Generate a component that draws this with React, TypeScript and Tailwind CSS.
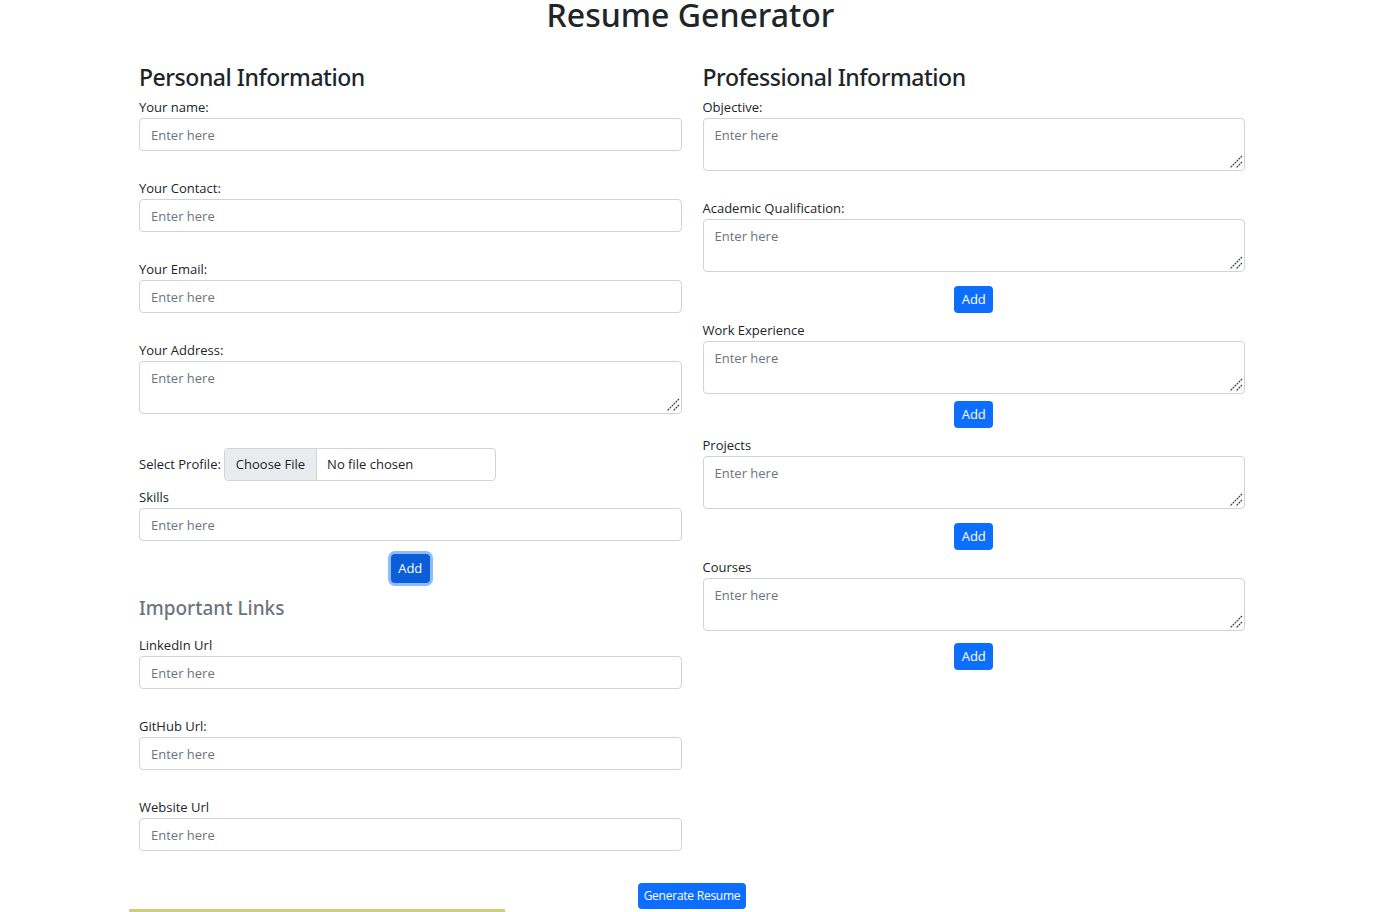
import React from 'react';

const inputCls =
  'block w-full h-[33px] rounded-[4px] border border-[#ced4da] bg-white px-[11px] text-[13px] text-[#212529] placeholder:text-[#6c757d] outline-none';
const areaCls =
  'block w-full h-[53px] rounded-[4px] border border-[#ced4da] bg-white px-[11px] py-[6px] leading-[21px] text-[13px] text-[#212529] placeholder:text-[#6c757d] outline-none resize-none';

function Label({ children }: { children: React.ReactNode }) {
  return <label className="block text-[13px] leading-[21px] text-[#212529]">{children}</label>;
}

// windows-style resize grip drawn over the textarea corner
function Grip() {
  return (
    <svg className="pointer-events-none absolute right-[2px] bottom-[2px]" width="14" height="14" viewBox="0 0 14 14">
      <path d="M13 1 L1 13" stroke="#3c3c3c" strokeWidth="1.2" strokeDasharray="2 0.8" />
      <path d="M13 7 L7 13" stroke="#3c3c3c" strokeWidth="1.2" strokeDasharray="2 0.8" />
    </svg>
  );
}

function Field({ label, area, className = '' }: { label: string; area?: boolean; className?: string }) {
  return (
    <div className={className}>
      <Label>{label}</Label>
      {area ? (
        <div className="relative">
          <textarea className={areaCls} placeholder="Enter here" />
          <Grip />
        </div>
      ) : (
        <input className={inputCls} placeholder="Enter here" />
      )}
    </div>
  );
}

function AddButton({ className = '' }: { className?: string }) {
  return (
    <div className={`flex justify-center ${className}`}>
      <button className="h-[27px] w-[39px] rounded-[4px] bg-[#0d6efd] text-[13px] text-white">Add</button>
    </div>
  );
}

export default function App() {
  return (
    <div className="min-h-screen bg-white font-['Open_Sans',sans-serif] text-[#212529]">
      <h1 className="-mt-[4px] text-center font-['Noto_Sans',sans-serif] text-[32px] leading-[38px] font-medium">
        Resume Generator
      </h1>

      <div className="ml-[139px] w-[1106px]">
        <div className="mt-[29px] grid grid-cols-2 gap-x-[21px]">
          {/* Personal */}
          <div>
            <h4 className="mb-[5px] font-['Noto_Sans',sans-serif] text-[23px] leading-[29px] font-medium tracking-[-0.02em]">
              Personal Information
            </h4>
            <Field label="Your name:" className="mb-[27px]" />
            <Field label="Your Contact:" className="mb-[27px]" />
            <Field label="Your Email:" className="mb-[27px]" />
            <Field label="Your Address:" area />

            <div className="mt-[34px] flex h-[33px] items-center">
              <span className="mr-[3px] text-[13px]">Select Profile:</span>
              <input
                type="file"
                className="h-[33px] w-[272px] overflow-hidden rounded-[4px] border border-[#ced4da] text-[13px] leading-[31px] text-[#212529] file:mr-[10px] file:h-[31px] file:border-0 file:border-r file:border-solid file:border-[#ced4da] file:bg-[#e9ecef] file:px-[11px] file:text-[13px] file:text-[#212529]"
              />
            </div>

            <Field label="Skills" className="mt-[6px]" />
            <div className="mt-[13px] flex justify-center">
              <button className="h-[29px] w-[39px] rounded-[4px] bg-[#0b5ed7] text-[13px] text-white ring-[3px] ring-[#8fbbfd]">
                Add
              </button>
            </div>

            <h5 className="mt-[13px] mb-[15px] font-['Noto_Sans',sans-serif] text-[19px] leading-[24px] font-medium text-[#6c757d]">
              Important Links
            </h5>
            <Field label="LinkedIn Url" className="mb-[27px]" />
            <Field label="GitHub Url:" className="mb-[27px]" />
            <Field label="Website Url" />
          </div>

          {/* Professional */}
          <div>
            <h4 className="mb-[5px] font-['Noto_Sans',sans-serif] text-[23px] leading-[29px] font-medium tracking-[-0.02em]">
              Professional Information
            </h4>
            <Field label="Objective:" area className="mb-[27px]" />
            <Field label="Academic Qualification:" area />
            <AddButton className="mt-[14px]" />
            <Field label="Work Experience" area className="mt-[7px]" />
            <AddButton className="mt-[7px]" />
            <Field label="Projects" area className="mt-[7px]" />
            <AddButton className="mt-[14px]" />
            <Field label="Courses" area className="mt-[7px]" />
            <AddButton className="mt-[12px]" />
          </div>
        </div>

        <div className="mt-[32px] flex justify-center">
          <button className="h-[26px] w-[108px] whitespace-nowrap rounded-[4px] bg-[#0d6efd] text-[12px] tracking-[-0.02em] text-white">
            Generate Resume
          </button>
        </div>
      </div>

      <div className="ml-[129px] h-[3px] w-[376px] bg-[#cfce7c]" />
    </div>
  );
}
